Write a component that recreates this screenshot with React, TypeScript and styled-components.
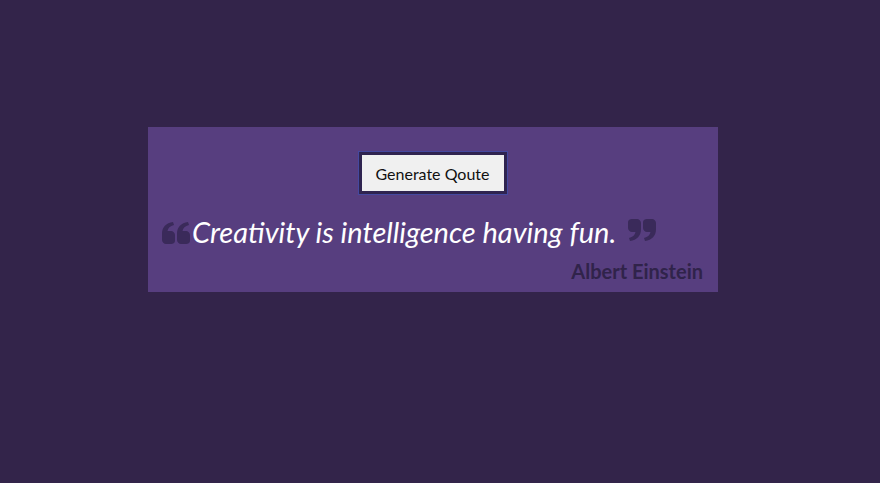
import React from "react";
import styled, { createGlobalStyle } from "styled-components";

const Global = createGlobalStyle`
  html, body { margin: 0; padding: 0; }
  body {
    background: #33244a;
    width: 880px;
    height: 483px;
    overflow: hidden;
    font-family: "Lato", "Open Sans", sans-serif;
  }
`;

const Page = styled.div`
  width: 880px;
  height: 483px;
  display: flex;
  justify-content: center;
  padding: 127px 14px 0 0;
  box-sizing: border-box;
`;

const Card = styled.div`
  width: 570px;
  height: 165px;
  box-sizing: border-box;
  background: #573e7f;
  padding: 25px 15px 0 14px;
  display: flex;
  flex-direction: column;
`;

const ButtonRow = styled.div`
  display: flex;
  justify-content: center;
`;

const Button = styled.button`
  box-sizing: border-box;
  width: 148px;
  height: 42px;
  margin-left: 0;
  background: #f0f0f0;
  border: 3.5px solid #2f2450;
  outline: 1.5px solid #4549a0;
  outline-offset: 0;
  color: #111;
  font-family: "Lato", sans-serif;
  font-size: 16px;
  padding: 0;
  cursor: pointer;
`;

const QuoteLine = styled.div`
  display: flex;
  align-items: center;
  margin-top: 23px;
  height: 30px;
`;

const QuoteText = styled.span`
  color: #ffffff;
  font-family: "Lato", sans-serif;
  font-style: italic;
  font-size: 29px;
  line-height: 30px;
  margin-left: 2px;
  margin-right: 12px;
`;

const Mark = styled.svg<{ $flip?: boolean }>`
  width: 28px;
  height: 22px;
  flex: none;
  fill: #3a2a5a;
  transform: ${(p) => (p.$flip ? "rotate(180deg)" : "none")};
  margin-top: ${(p) => (p.$flip ? "-4px" : "2px")};
`;

const Author = styled.div`
  align-self: flex-end;
  margin-top: 12px;
  color: #30234a;
  font-family: "Lato", sans-serif;
  font-weight: 700;
  font-size: 20px;
`;

const glyph =
  "M0 12 C0 5 4 1 11 0 L12 3 C8 4 6 6 5.5 9 L9 9 C11 9 13 11 13 13 L13 19 C13 21 11 22 9 22 L4 22 C2 22 0 20 0 18 Z";

const QuoteMark = ({ flip }: { flip?: boolean }) => (
  <Mark viewBox="0 0 28 22" $flip={flip}>
    <path d={glyph} />
    <path d={glyph} transform="translate(15 0)" />
  </Mark>
);

export default function App() {
  return (
    <>
      <Global />
      <Page>
        <Card>
          <ButtonRow>
            <Button>Generate Qoute</Button>
          </ButtonRow>
          <QuoteLine>
            <QuoteMark />
            <QuoteText>Creativity is intelligence having fun.</QuoteText>
            <QuoteMark flip />
          </QuoteLine>
          <Author>Albert Einstein</Author>
        </Card>
      </Page>
    </>
  );
}
